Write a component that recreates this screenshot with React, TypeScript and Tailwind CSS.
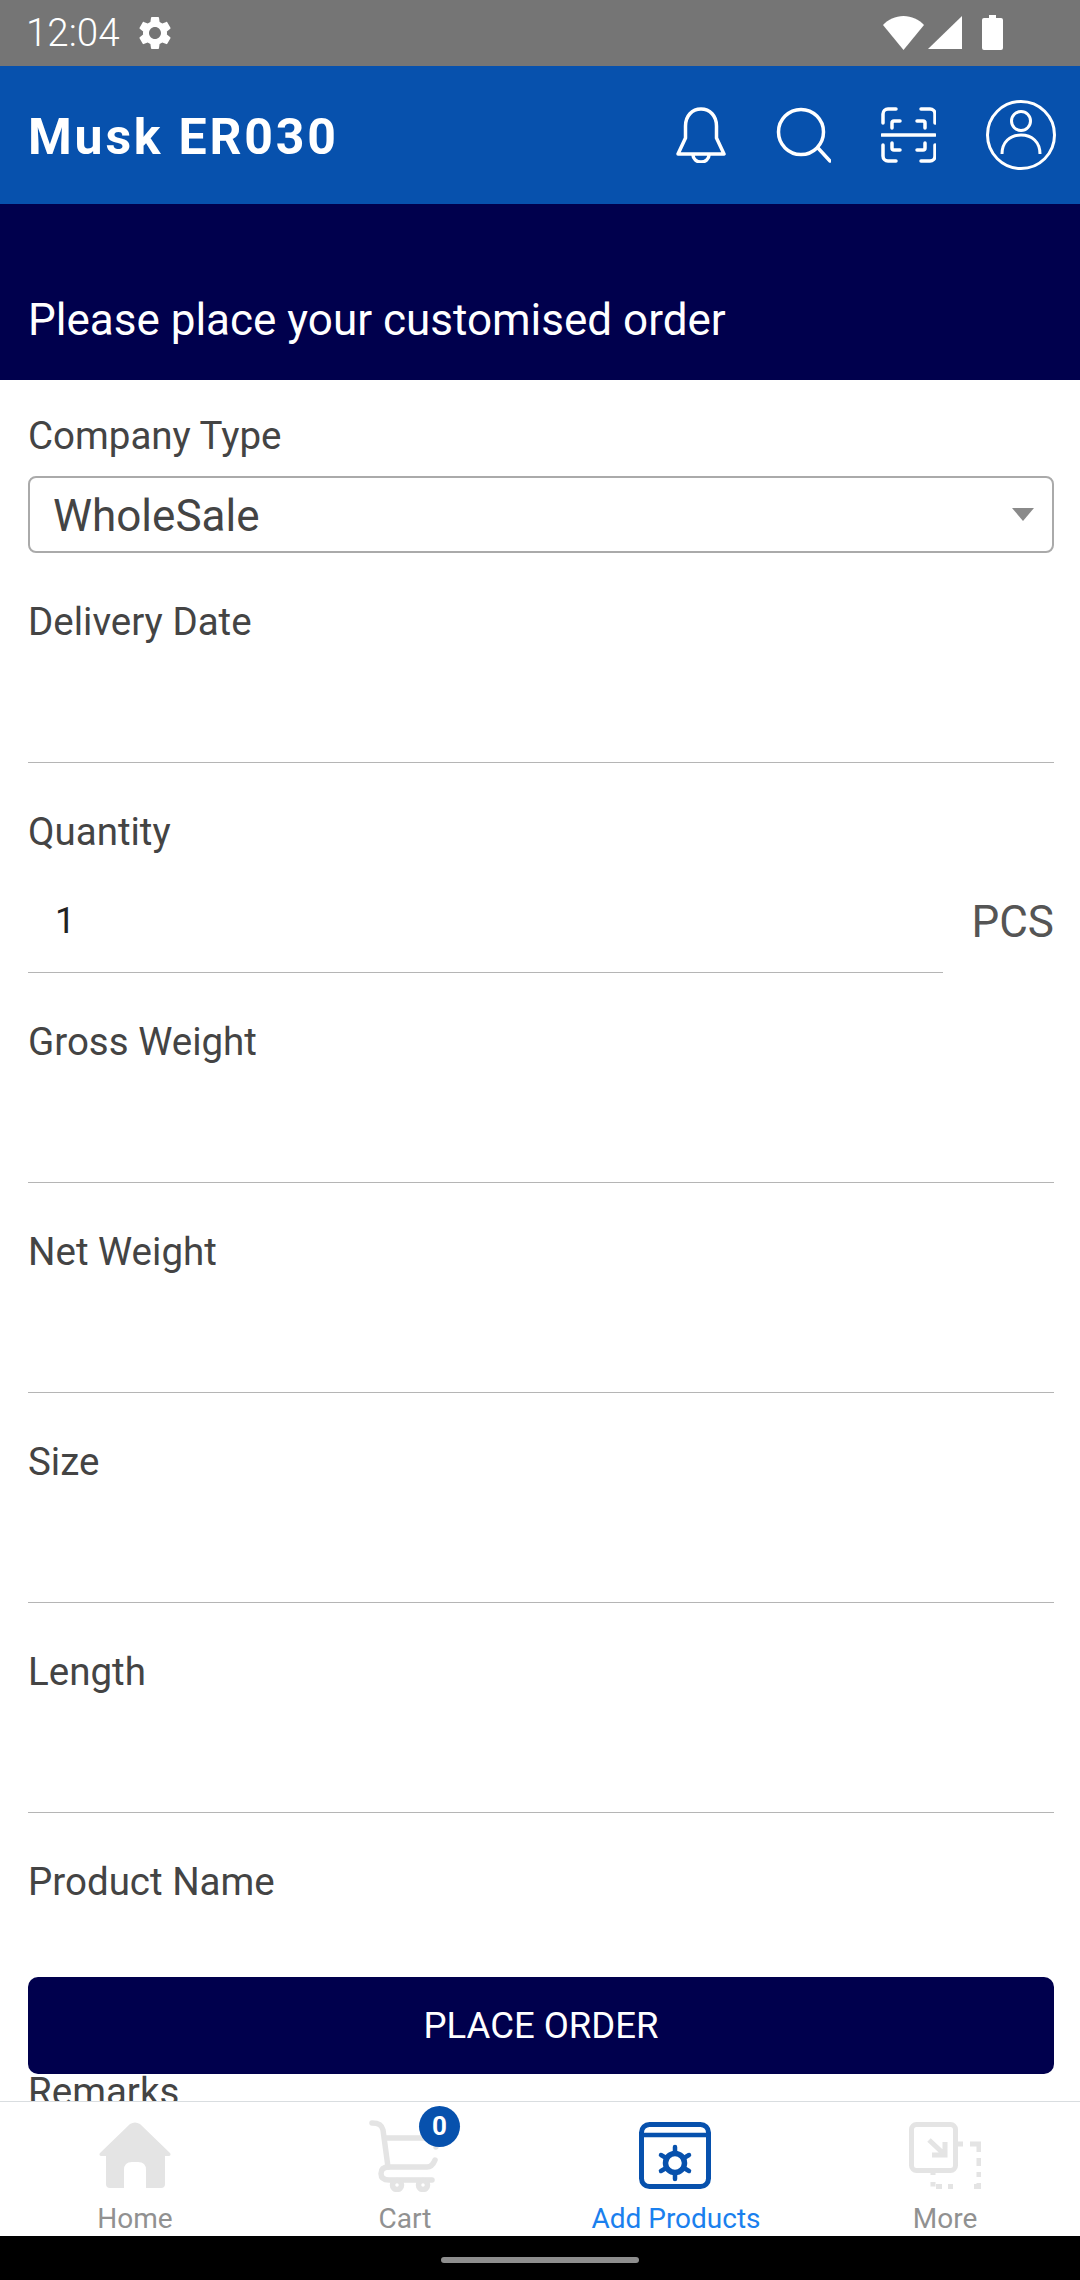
import React from "react";

const GEAR =
    "M19.14 12.94c.04-.3.06-.61.06-.94 0-.32-.02-.64-.07-.94l2.03-1.58c.18-.14.23-.41.12-.61l-1.92-3.32c-.12-.22-.37-.29-.59-.22l-2.39.96c-.5-.38-1.03-.7-1.62-.94l-.36-2.54c-.04-.24-.24-.41-.48-.41h-3.84c-.24 0-.43.17-.47.41l-.36 2.54c-.59.24-1.13.57-1.62.94l-2.39-.96c-.22-.08-.47 0-.59.22L2.74 8.87c-.12.21-.08.47.12.61l2.03 1.58c-.05.3-.09.63-.09.94s.02.64.07.94l-2.03 1.58c-.18.14-.23.41-.12.61l1.92 3.32c.12.22.37.29.59.22l2.39-.96c.5.38 1.03.7 1.62.94l.36 2.54c.05.24.24.41.48.41h3.84c.24 0 .44-.17.47-.41l.36-2.54c.59-.24 1.13-.56 1.62-.94l2.39.96c.22.08.47 0 .59-.22l1.92-3.32c.12-.22.07-.47-.12-.61l-2.01-1.58zM12 15.6c-1.98 0-3.6-1.62-3.6-3.6s1.62-3.6 3.6-3.6 3.6 1.62 3.6 3.6-1.62 3.6-3.6 3.6z";

const StatusBar = () => (
    <div className="h-[66px] shrink-0 bg-[#757575] flex items-center pl-[26px] pr-[77px] text-white">
        <span className="text-[38.500px] leading-none font-light">12:04</span>
        <svg className="ml-[15px] w-[40px] h-[40px]" viewBox="0 0 24 24" fill="white">
            <path fillRule="evenodd" d={GEAR} />
        </svg>
        <div className="ml-auto flex items-center gap-[4px]">
            <svg className="w-[41px] h-[36px]" viewBox="0 0 41 36" fill="white">
                <path d="M0 10C5 4.500 12.500 1 20.500 1S36 4.500 41 10L20.500 35z" />
            </svg>
            <svg className="w-[34px] h-[36px]" viewBox="0 0 34 36" fill="white">
                <path d="M0 34L34 1v33z" />
            </svg>
            <svg className="ml-[16px] w-[21px] h-[36px]" viewBox="0 0 21 36" fill="white">
                <path d="M7 0h7v3h5a2 2 0 0 1 2 2v28a2 2 0 0 1-2 2H2a2 2 0 0 1-2-2V5a2 2 0 0 1 2-2h5z" />
            </svg>
        </div>
    </div>
);

const HeaderIcons = () => (
    <div className="ml-auto flex items-center gap-[50px]">
        <svg className="w-[50px] h-[56px]" viewBox="0 0 50 56" fill="none" stroke="white" strokeWidth="3.5" strokeLinejoin="round">
            <path d="M2 47L9.500 31V19C9.500 9 16 2 25 2s15.500 7 15.500 17v12L48 47z" />
            <path d="M17 48a8 7 0 0 0 16 0" />
        </svg>
        <svg className="w-[55px] h-[56px]" viewBox="0 0 55 56" fill="none" stroke="white" strokeWidth="3.5" strokeLinecap="round">
            <circle cx="25" cy="25" r="22.500" />
            <path d="M42 41l12 13" />
        </svg>
        <svg className="w-[55px] h-[56px]" viewBox="0 0 55 56" fill="none" stroke="white" strokeWidth="3.5" strokeLinecap="round">
            <path d="M15 2H7a5 5 0 0 0-5 5v9M40 2h9a5 5 0 0 1 5 5v9M2 38v11a5 5 0 0 0 5 5h8M54 38v11a5 5 0 0 1-5 5h-9" />
            <path d="M19 14h-6a2 2 0 0 0-2 2v5M36 14h6a2 2 0 0 1 2 2v5M11 36v5a2 2 0 0 0 2 2h6M44 36v5a2 2 0 0 1-2 2h-6" />
            <path d="M1 28h53" />
        </svg>
        <svg className="w-[70px] h-[70px]" viewBox="0 0 70 70" fill="none" stroke="white" strokeWidth="3">
            <circle cx="35" cy="35" r="33.500" />
            <circle cx="35" cy="21" r="9.500" />
            <path d="M16 54c0-12 8-19 19-19s19 7 19 19" />
        </svg>
    </div>
);

const Field = ({ label }: { label: string }) => (
    <div className="h-[210px] shrink-0 flex flex-col">
        <div className="h-[64px] pt-[8px] text-[38.500px] leading-[44px] text-[#444444]">{label}</div>
        <div className="h-[107px] border-b border-[#b5b5b5]" />
    </div>
);

const QuantityField = () => (
    <div className="h-[210px] shrink-0 flex flex-col">
        <div className="h-[64px] pt-[8px] text-[38.500px] leading-[44px] text-[#444444]">Quantity</div>
        <div className="flex items-stretch">
            <div className="flex-1 h-[107px] border-b border-[#b5b5b5] pl-[27px] pt-[33px] text-[36px] leading-[44px] text-[#222222]">1</div>
            <div className="w-[111px] pt-[34px] text-[44px] leading-[44px] text-right text-[#555555]">PCS</div>
        </div>
    </div>
);

const NavIcon = ({ name }: { name: string }) => {
    if (name === "home") {
        return (
            <svg className="w-[72px] h-[67px]" viewBox="0 0 72 67" fill="#e4e4e4">
                <path
                    fillRule="evenodd"
                    d="M31 2q5-3 10 0l30 29q1.500 2.500-1 3h-4v28q0 4-4 4H47V48q0-8-8-8h-6q-8 0-8 8v18H11q-4 0-4-4V34H2q-2.500-.5-1-3z"
                />
            </svg>
        );
    }
    if (name === "cart") {
        return (
            <svg className="w-[72px] h-[72px] -mt-[2px]" viewBox="0 0 72 72" fill="none" stroke="#e4e4e4" strokeWidth="5.500" strokeLinecap="round" strokeLinejoin="round">
                <path d="M3 3c7 0 10 2 11 7l5 37" />
                <path d="M16 18h52l-1 9" />
                <path d="M66 40c-2 5-4 7-8 7H20c-5 0-8 2-8 6.500s3 6.500 8 6.500h43" />
                <circle cx="28" cy="65" r="4.500" />
                <circle cx="54" cy="65" r="4.500" />
            </svg>
        );
    }
    if (name === "add") {
        return (
            <svg className="w-[72px] h-[67px]" viewBox="0 0 72 67" fill="none" stroke="#0751ad">
                <rect x="2.500" y="2.500" width="67" height="62" rx="8" strokeWidth="5" />
                <path d="M3 13h66" strokeWidth="4.500" />
                <circle cx="36" cy="41" r="9.500" strokeWidth="5.500" />
                <path d="M36 25v6M36 51v6M22 33l6 3.500M44 45.500l6 3.500M22 49l6-3.500M44 36.500l6-3.500" strokeWidth="4.500" strokeLinecap="round" />
            </svg>
        );
    }
    return (
        <svg className="w-[72px] h-[67px]" viewBox="0 0 72 67" fill="none" stroke="#e4e4e4" strokeWidth="5">
            <rect x="2.500" y="2.500" width="44" height="46" rx="5" />
            <path d="M20 18l16 15M36 20v13H23" />
            <path d="M48 22h6M61 22h9v8M70 36v8M70 50v5M70 61v3.500h-5M44 64.500h-5M33 64.500h-6M24 64.500V60M24 53v-5" />
        </svg>
    );
};

const NavItem = ({ icon, label, active, badge }: { icon: string; label: string; active?: boolean; badge?: string }) => (
    <div className="flex flex-col items-center relative">
        <div className="h-[96px] pt-[20px] flex justify-center relative w-[72px]">
            <NavIcon name={icon} />
            {badge && (
                <div className="absolute left-[50px] top-[4px] w-[41px] h-[41px] rounded-full bg-[#0751ad] text-white text-[26px] font-bold flex items-center justify-center">
                    {badge}
                </div>
            )}
        </div>
        <div className={`text-[28px] leading-[32px] mt-[5px] whitespace-nowrap ${active ? "text-[#1a80ee] pl-[2px]" : "text-[#919191]"}`}>{label}</div>
    </div>
);

export default function App() {
    return (
        <div className="w-[1080px] h-[2280px] overflow-hidden bg-white flex flex-col font-['Roboto',sans-serif]">
            <StatusBar />

            <div className="h-[138px] shrink-0 bg-[#0751ad] flex items-center pl-[28px] pr-[24px]">
                <span className="pt-[3px] text-[50px] leading-none font-bold tracking-[2.800px] text-white">Musk ER030</span>
                <HeaderIcons />
            </div>

            <div className="h-[176px] shrink-0 bg-[#00004d] flex items-end pl-[28px] pb-[32px]">
                <span className="text-[44px] leading-[56px] text-white">Please place your customised order</span>
            </div>

            <div className="flex-1 min-h-0 relative overflow-hidden pl-[28px] pr-[26px] pt-[26px] flex flex-col">
                <div className="h-[70px] shrink-0 text-[38.500px] leading-[44px] text-[#444444] pt-[8px]">Company Type</div>
                <div className="h-[77px] shrink-0 border-2 border-[#aaaaaa] rounded-[8px] flex items-center pl-[23px] pr-[18px] text-[44px] text-[#444444]">
                    <span className="pt-[2px]">WholeSale</span>
                    <div className="ml-auto w-0 h-0 border-x-[11px] border-x-transparent border-t-[13px] border-t-[#8a8a8a]" />
                </div>
                <div className="h-[39px] shrink-0" />
                <Field label="Delivery Date" />
                <QuantityField />
                <Field label="Gross Weight" />
                <Field label="Net Weight" />
                <Field label="Size" />
                <Field label="Length" />
                <Field label="Product Name" />
                <Field label="Remarks" />
                <button className="absolute left-[28px] right-[26px] top-[1597px] h-[97px] rounded-[10px] bg-[#00004d] text-white text-[36.500px] pt-[2px]">
                    PLACE ORDER
                </button>
            </div>

            <div className="h-[135px] shrink-0 bg-white border-t border-[#d9dde0] grid grid-cols-4">
                <NavItem icon="home" label="Home" />
                <NavItem icon="cart" label="Cart" badge="0" />
                <NavItem icon="add" label="Add Products" active />
                <NavItem icon="more" label="More" />
            </div>

            <div className="h-[44px] shrink-0 bg-black flex justify-center pt-[21px]">
                <div className="w-[198px] h-[6px] rounded-full bg-[#8e8e8e]" />
            </div>
        </div>
    );
}
